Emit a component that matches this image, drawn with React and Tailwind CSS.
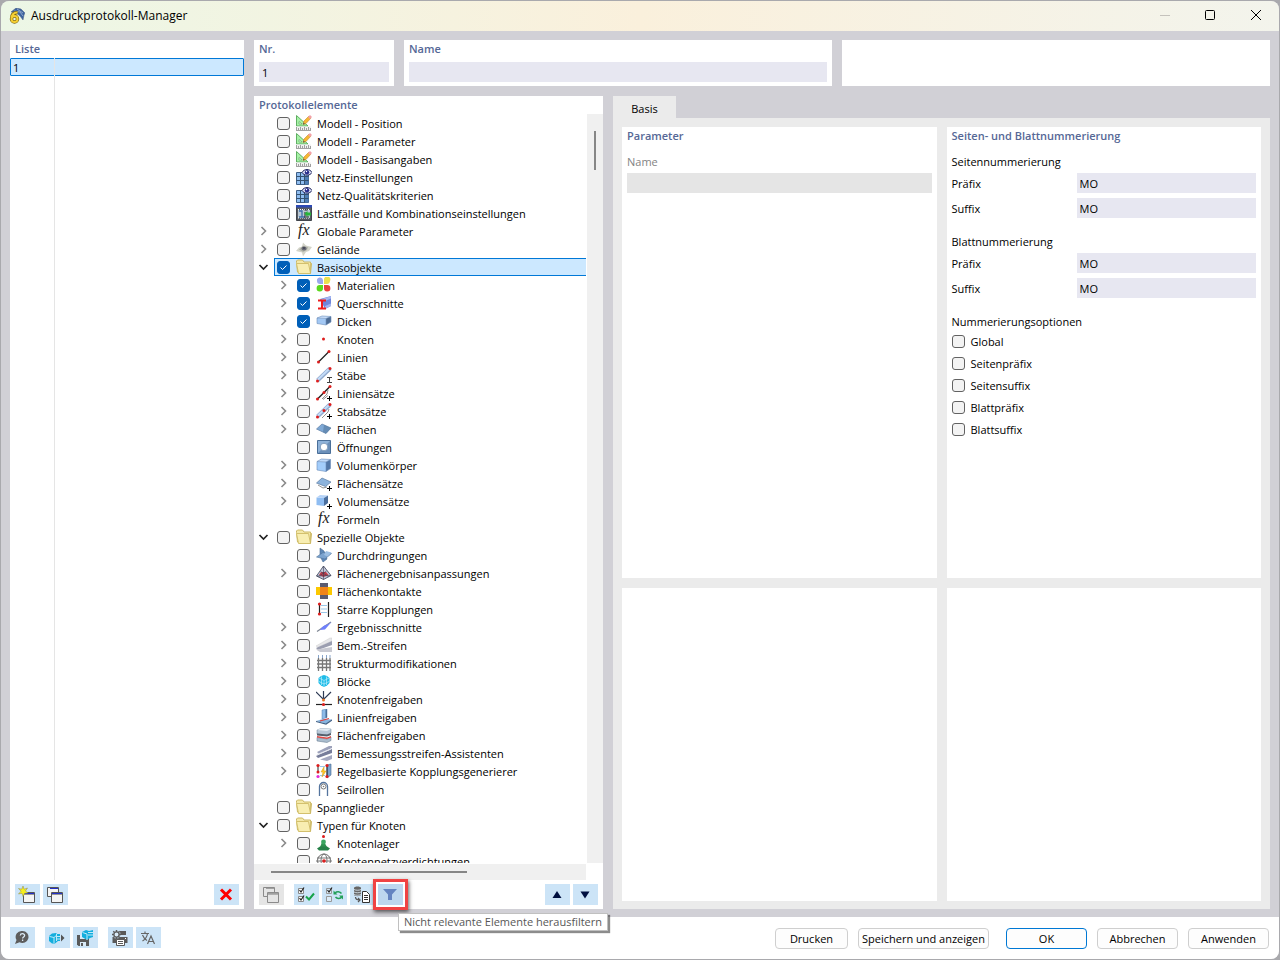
import React, { useState } from "react";

const I = ({ children }) => (
    <svg viewBox="0 0 16 16" className="w-4 h-4 shrink-0" fill="none" aria-hidden="true">{children}</svg>
);

const Plus = () => <path d="M13.500 11v5M11 13.500h5" stroke="#000" />;

const icons = {
    model: (
        <I>
            <path d="M0.500 0.500L12 11H0.500z" fill="#a6f2a6" stroke="#5fae62" />
            <path d="M3 6.500L6 9H3z" fill="#fff" stroke="#5fae62" strokeWidth=".7" />
            <path d="M7 9.500L8 6L13 1L15 3L10 8.500z" fill="#f7b733" stroke="#c48a2c" strokeWidth=".6" />
            <path d="M12 2L14 0l2 2-2 2z" fill="#f2a0a8" />
            <path d="M7 9.500l.5-2 1.500 1.500z" fill="#555" />
            <path d="M0 11.500h15V15H0z" fill="#f1f1f1" />
            <path d="M0.500 15v-3M2.500 15v-2M4.500 15v-3M6.500 15v-2M8.500 15v-3M10.500 15v-2M12.500 15v-3M14.500 15v-2M0 15.500h15" stroke="#8a8a8a" strokeWidth=".8" />
        </I>
    ),
    mesh: (
        <I>
            <path d="M0.500 3.500h12v12H0.500z" fill="#8fbdf0" stroke="#3e5f86" />
            <path d="M9 8h3.500v7.500H9z" fill="#4f7fb5" />
            <path d="M4.500 3.500v12M8.500 3.500v12M0.500 7.500h12M0.500 11.500h12" stroke="#34516f" />
            <path d="M6 3.500C8-.5 14-.5 16 3.500 14 7 8 7 6 3.500z" fill="#dfe2f5" stroke="#20265e" />
            <circle cx="11" cy="3.200" r="2.200" fill="#272c8c" />
            <circle cx="10.500" cy="2.500" r=".7" fill="#fff" />
        </I>
    ),
    loads: (
        <I>
            <path d="M0.500 0.500h15v15H0.500z" fill="#555a62" stroke="#41454c" />
            <path d="M0 0h16v2.500H0z" fill="#2c49b4" />
            <path d="M2 5h12v8H2z" fill="#b9c8d4" />
            <path d="M2 4.500h12M2 13h12" stroke="#fff" strokeDasharray="1 1" />
            <path d="M3 12h6M3 6h3v6" stroke="#3d6fa8" strokeWidth="1.300" />
            <path d="M8.500 5h3M8 12h5M9 7v4" stroke="#222" />
            <path d="M8.500 8.500L11.500 6v1.500H15v3h-3.500V12z" fill="#27b43a" />
        </I>
    ),
    fx: (
        <I>
            <text x="2" y="12" fill="#222" fontSize="16" fontStyle="italic" fontFamily="Liberation Serif, serif">fx</text>
        </I>
    ),
    terrain: (
        <I>
            <path d="M0 10L3 6.500l3-1 1-4 3 3 6 1.500-3 4-3 1-3 4.500L6 11.500z" fill="#d3d4c9" />
            <path d="M3 8.500l4-3.500 5 1-1 3-4 2z" fill="#aeb0a6" />
            <ellipse cx="8" cy="7.500" rx="2.500" ry="2" fill="#6a6b76" />
            <ellipse cx="8" cy="7" rx="1.200" ry="1" fill="#454655" />
        </I>
    ),
    folder: (
        <I>
            <path d="M0.500 3.500V2L1.500 1h5L8 3h6.500v10H1.500z" fill="#f3e8a8" stroke="#cdb964" />
            <path d="M2.500 14.500L0.500 4.500h12l2 10z" fill="#f8eeb2" stroke="#d3c06d" />
            <path d="M14.500 3.500l1 1-1 10" fill="#dccb84" stroke="#cdb964" />
        </I>
    ),
    materials: (
        <I>
            <path d="M1 4a3 3 0 016-1v4H4A3 3 0 011 4z" fill="#9ba8ec" />
            <path d="M8 7V3a3.200 3.200 0 116 1c0 2-1.500 3-3 3z" fill="#eae04e" />
            <path d="M7 8v3a3.200 3.200 0 11-3-3z" fill="#5cd81c" />
            <path d="M8 8h3a3.200 3.200 0 11-3 3z" fill="#e8413f" />
        </I>
    ),
    section: (
        <I>
            <path d="M4 4L15 1v10l-6 3z" fill="#6f86da" />
            <path d="M5 4.500l10-3.500v2.500L9 6zM9 11l6-2.500v2.500l-6 3z" fill="#a3b5f0" />
            <path d="M2 5.500h8M2 13.500h8M6 5.500v8" stroke="#ee1c1c" strokeWidth="2" />
        </I>
    ),
    thickness: (
        <I>
            <path d="M1 5l9 .5v6.500L1 10.500z" fill="#a3c8f4" />
            <path d="M1 5l5-2 9 .5-5 2z" fill="#c9defa" />
            <path d="M10 5.500l5-2V9l-5 3z" fill="#4c6b94" />
            <path d="M1 5l9 .5V12L1 10.500zM1 5l5-2 9 .5-5 2M15 3.500V9l-5 3" stroke="#6c8db9" strokeWidth=".6" />
        </I>
    ),
    node: <I><circle cx="7.500" cy="8" r="1.500" fill="#dd1d1d" /></I>,
    line: (
        <I>
            <path d="M2 13.500L13 2.500" stroke="#222" strokeWidth="1.300" />
            <circle cx="2.500" cy="13" r="1.500" fill="#dd1d1d" /><circle cx="13" cy="2.500" r="1.500" fill="#dd1d1d" />
        </I>
    ),
    member: (
        <I>
            <path d="M1.500 13.500L14 1.500" stroke="#8fa9cd" strokeWidth="4" />
            <path d="M1.500 13L14 1" stroke="#c3dbf8" strokeWidth="2" />
            <circle cx="1.500" cy="14" r="1.500" fill="#dd1d1d" /><circle cx="14" cy="1.500" r="1.500" fill="#dd1d1d" />
            <path d="M11 10.500h5M11 15.500h5M13.500 10.500v5" stroke="#444" />
        </I>
    ),
    lineSet: (
        <I>
            <path d="M1 14.500L14 1.500" stroke="#222" strokeWidth="1.500" />
            <path d="M6 14l5-5 1-4M7 14.500l5-4" stroke="#777" strokeWidth=".8" />
            <circle cx="1.500" cy="14" r="1.500" fill="#dd1d1d" /><circle cx="8" cy="7.500" r="1.500" fill="#dd1d1d" /><circle cx="14" cy="1.500" r="1.500" fill="#dd1d1d" />
            <Plus />
        </I>
    ),
    memberSet: (
        <I>
            <path d="M1.500 13.500L14 1.500" stroke="#8ea9cf" strokeWidth="4" />
            <path d="M1.500 13L14 1" stroke="#c3dbf8" strokeWidth="2" />
            <path d="M6 15l6-6 1-3" stroke="#777" strokeWidth=".8" />
            <circle cx="1.500" cy="14" r="1.500" fill="#dd1d1d" /><circle cx="8" cy="7.500" r="1.500" fill="#dd1d1d" /><circle cx="14" cy="1.500" r="1.500" fill="#dd1d1d" />
            <Plus />
        </I>
    ),
    surface: (
        <I>
            <path d="M0.500 8L6 3 15 7l-5 5.500z" fill="#7fa9d6" stroke="#5b7ca4" strokeWidth=".7" />
            <path d="M8 4L15 7l-5 5.500-3-1.500z" fill="#54799f" opacity=".6" />
        </I>
    ),
    opening: (
        <I>
            <path d="M1.500 1.500h13v13h-13z" fill="#8fb3da" stroke="#4a6f99" />
            <path d="M14 2v12H2z" fill="#456c98" opacity=".5" />
            <circle cx="8" cy="8" r="3.800" fill="#fff" stroke="#7f9cbd" />
        </I>
    ),
    solid: (
        <I>
            <path d="M1 4.500l9 .5v9.500L1 13z" fill="#a3cdfb" />
            <path d="M1 4.500L5.500 2l9 .5L10 5z" fill="#c0dafa" />
            <path d="M10 5l4.500-2.500v9L10 14.500z" fill="#5277a8" />
            <path d="M1 4.500l9 .5v9.500L1 13zM1 4.500L5.500 2l9 .5L10 5M14.500 2.500v9l-4.500 3" stroke="#6a8cb8" strokeWidth=".6" />
        </I>
    ),
    surfaceSet: (
        <I>
            <path d="M0.500 8L6 3 15 7l-5.500 4.500z" fill="#8cb3dc" stroke="#5b7ca4" strokeWidth=".7" />
            <path d="M2 10l5 3 4-1" stroke="#777" strokeWidth=".8" />
            <Plus />
        </I>
    ),
    solidSet: (
        <I>
            <path d="M0.500 4.500l7.500.5v8L0.500 12z" fill="#8fbdf2" />
            <path d="M0.500 4.500L4 2l8 .5L8 5z" fill="#b4d2f7" />
            <path d="M8 5l4-2.500V10l-4 3z" fill="#4b6f9e" />
            <Plus />
        </I>
    ),
    intersection: (
        <I>
            <path d="M4 1l4 3 3 8-4 3-3-6z" fill="#5d87b6" stroke="#456a94" strokeWidth=".6" />
            <path d="M0.500 10L7 5.500l8.500 1L9 12z" fill="#7ba3cf" stroke="#50739b" strokeWidth=".6" />
            <path d="M8 8l2-4 5.500 1.500-4 4z" fill="#9dbfe3" />
        </I>
    ),
    resultAdjust: (
        <I>
            <path d="M7.500 1L0.500 11l7 3.500 7.500-4z" fill="#c3c8d9" stroke="#3a3f55" strokeWidth=".8" />
            <path d="M3 10l2-3h5l2.500 3-5 2z" fill="#c93c48" />
            <path d="M7.500 1v13.500M0.500 11l14.500-.5M4.500 6.500l8 5M10.500 6l-8 5.500" stroke="#3a3f55" strokeWidth=".6" />
        </I>
    ),
    contact: (
        <I>
            <path d="M4 0h8v16H4z" fill="#5b5b70" /><path d="M0 4h16v8H0z" fill="#fcc800" /><path d="M4 4h8v8H4z" fill="#f18419" />
        </I>
    ),
    rigid: (
        <I>
            <path d="M3.500 3v10M12.500 1v15" stroke="#222" strokeWidth="1.200" />
            <path d="M5 4.500h6M5 8h6M5 11.500h6" stroke="#9bc7e8" />
            <circle cx="3.500" cy="3" r="1.600" fill="#dd1d1d" /><circle cx="3.500" cy="13" r="1.600" fill="#dd1d1d" />
        </I>
    ),
    resultSection: (
        <I>
            <path d="M1 12.500L15 3" stroke="#7e8693" strokeWidth="1.200" />
            <path d="M5 9.500c3-4 6-3 10.500-6.500L9 10.500 4 11z" fill="#6f80fb" />
        </I>
    ),
    strip: (
        <I>
            <path d="M0 9L14 1h2v3L2 10z" fill="#e8e8ea" stroke="#ccc" strokeWidth=".5" />
            <path d="M0 11L16 4v4L2 13z" fill="#9b9eb0" />
            <path d="M0 12.500l16-2.500v5H4z" fill="#c9cad2" />
        </I>
    ),
    structure: (
        <I>
            <path d="M2.500 3v13M6.500 3v13M10.500 3v13M14 3v13M1 5.500h14M1 9h14M1 12.500h14" stroke="#777" strokeWidth="1.300" />
            <path d="M2.500 0v3M6.500 0v3M10.500 0v3M14 0v3" stroke="#89a6cc" />
        </I>
    ),
    block: (
        <I>
            <path d="M8 2l3 1 2.500 2v5L11 12.500 8 14l-3-1.500L2.500 10V5L5 3z" fill="#1fbce8" />
            <path d="M3 5l5 2.500L13 5M8 7.500v6M5.500 3.500v8.500M10.500 3.500v8.500M3 8.500L8 11l5-2.500" stroke="#b8ecfa" strokeWidth=".7" />
        </I>
    ),
    nodeRelease: (
        <I>
            <path d="M0 1l7.500 7.500L15 1M7.500 0v8" stroke="#2e3b55" strokeWidth="1.200" />
            <path d="M0 13.500h16" stroke="#222" strokeWidth="1.200" />
            <circle cx="7.500" cy="9" r="1.500" fill="#e6792b" /><circle cx="7.500" cy="13.500" r="1.600" fill="#dd1d1d" />
        </I>
    ),
    lineRelease: (
        <I>
            <path d="M6 1l5-1v8.500l-5 1.500z" fill="#8dbbe8" stroke="#5583b3" strokeWidth=".5" />
            <path d="M9.500 .5L11 0v8.500l-1.500.5z" fill="#4a7099" />
            <path d="M0 12l7-2 9 .5-6 4z" fill="#86b6e2" />
            <path d="M4 12L13 9.500" stroke="#e0403c" strokeWidth="1.200" />
            <path d="M0 12.500l10 2.500 6-4" stroke="#3f5f85" strokeWidth="1.200" />
        </I>
    ),
    surfaceRelease: (
        <I>
            <path d="M1 3l4-1.500 10 .5v4l-4 2L1 7z" fill="#b7c7d6" stroke="#71889e" strokeWidth=".5" />
            <path d="M1 3l4-1.500 10 .5-4 2z" fill="#e3ebf2" />
            <path d="M1 10.500l10 1.500 4-2v3.500l-4 2L1 14z" fill="#a9bccd" stroke="#5d7389" strokeWidth=".5" />
            <path d="M1 6.500l10 1L15 6v2l-4 1.500L1 8.500z" fill="#55606c" />
            <path d="M1 9l10 1.500L15 9v1.500l-4 1.500-10-1.500z" fill="#e04a45" />
        </I>
    ),
    stripAssist: (
        <I>
            <path d="M1 7L13 1h3v2L3 9z" fill="#9ca1ba" />
            <path d="M0 11L16 4v4L2 13z" fill="#777d9a" />
            <path d="M4 14.500l12-4.500v4l-5 2z" fill="#a4a8c0" />
            <path d="M1 9.500L15 4" stroke="#e4e6ee" />
        </I>
    ),
    ruleCoupling: (
        <I>
            <path d="M11 2l4-1v11l-4 3z" fill="#7ba3cf" stroke="#3f648d" strokeWidth=".6" />
            <path d="M2 3v6M11 3v10" stroke="#222" />
            <path d="M4 3.500h5M4 12.500h5" stroke="#9bc7e8" />
            <path d="M8 4L5 9h2l-1 5 4-6H8z" fill="#ffc928" stroke="#d19a15" strokeWidth=".5" />
            <circle cx="2" cy="2.500" r="1.600" fill="#dd1d1d" /><circle cx="11" cy="2.500" r="1.600" fill="#dd1d1d" />
            <circle cx="2" cy="9" r="1.500" fill="#dd1d1d" />
            <circle cx="2" cy="13.500" r="1.600" fill="#e22ad8" /><circle cx="11" cy="13.500" r="1.600" fill="#dd1d1d" />
        </I>
    ),
    pulley: (
        <I>
            <path d="M3.500 15V5.500a4 4 0 018 0V15" stroke="#54749e" strokeWidth="1.300" />
            <circle cx="7.500" cy="5.500" r="2.500" fill="#fff" stroke="#777" /><circle cx="7.500" cy="5.500" r=".8" fill="#777" />
        </I>
    ),
    support: (
        <I>
            <path d="M7 5l4 7H4z" fill="#2f9150" /><path d="M1 13.500l3-2h7l3 2-2 2H3z" fill="#268148" />
            <circle cx="7.500" cy="7" r="2.400" fill="#3aa660" /><circle cx="7.500" cy="1.500" r="1.500" fill="#dd1d1d" />
        </I>
    ),
    refinement: (
        <I>
            <circle cx="8" cy="7.500" r="6.500" stroke="#666" /><ellipse cx="8" cy="7.500" rx="3" ry="6.500" stroke="#777" />
            <path d="M1 5h14M0 8h16" stroke="#777" /><circle cx="8" cy="8" r="1.800" fill="#dd1d1d" />
        </I>
    ),
};

// open: undefined = leaf, false = collapsed, true = expanded
const tree = [
    { label: "Modell - Position", icon: "model" },
    { label: "Modell - Parameter", icon: "model" },
    { label: "Modell - Basisangaben", icon: "model" },
    { label: "Netz-Einstellungen", icon: "mesh" },
    { label: "Netz-Qualitätskriterien", icon: "mesh" },
    { label: "Lastfälle und Kombinationseinstellungen", icon: "loads" },
    { label: "Globale Parameter", icon: "fx", open: false },
    { label: "Gelände", icon: "terrain", open: false },
    { label: "Basisobjekte", icon: "folder", open: true, checked: true, selected: true },
    { label: "Materialien", icon: "materials", child: true, open: false, checked: true },
    { label: "Querschnitte", icon: "section", child: true, open: false, checked: true },
    { label: "Dicken", icon: "thickness", child: true, open: false, checked: true },
    { label: "Knoten", icon: "node", child: true, open: false },
    { label: "Linien", icon: "line", child: true, open: false },
    { label: "Stäbe", icon: "member", child: true, open: false },
    { label: "Liniensätze", icon: "lineSet", child: true, open: false },
    { label: "Stabsätze", icon: "memberSet", child: true, open: false },
    { label: "Flächen", icon: "surface", child: true, open: false },
    { label: "Öffnungen", icon: "opening", child: true },
    { label: "Volumenkörper", icon: "solid", child: true, open: false },
    { label: "Flächensätze", icon: "surfaceSet", child: true, open: false },
    { label: "Volumensätze", icon: "solidSet", child: true, open: false },
    { label: "Formeln", icon: "fx", child: true },
    { label: "Spezielle Objekte", icon: "folder", open: true },
    { label: "Durchdringungen", icon: "intersection", child: true },
    { label: "Flächenergebnisanpassungen", icon: "resultAdjust", child: true, open: false },
    { label: "Flächenkontakte", icon: "contact", child: true },
    { label: "Starre Kopplungen", icon: "rigid", child: true },
    { label: "Ergebnisschnitte", icon: "resultSection", child: true, open: false },
    { label: "Bem.-Streifen", icon: "strip", child: true, open: false },
    { label: "Strukturmodifikationen", icon: "structure", child: true, open: false },
    { label: "Blöcke", icon: "block", child: true, open: false },
    { label: "Knotenfreigaben", icon: "nodeRelease", child: true, open: false },
    { label: "Linienfreigaben", icon: "lineRelease", child: true, open: false },
    { label: "Flächenfreigaben", icon: "surfaceRelease", child: true, open: false },
    { label: "Bemessungsstreifen-Assistenten", icon: "stripAssist", child: true, open: false },
    { label: "Regelbasierte Kopplungsgenerierer", icon: "ruleCoupling", child: true, open: false },
    { label: "Seilrollen", icon: "pulley", child: true },
    { label: "Spannglieder", icon: "folder" },
    { label: "Typen für Knoten", icon: "folder", open: true },
    { label: "Knotenlager", icon: "support", child: true, open: false },
    { label: "Knotennetzverdichtungen", icon: "refinement", child: true },
];

function CheckBox({ id, defaultChecked = false }) {
    const [checked, setChecked] = useState(defaultChecked);
    return (
        <span className="relative w-[13px] h-[13px] shrink-0">
            <input
                id={id}
                type="checkbox"
                checked={checked}
                onChange={() => setChecked(!checked)}
                className="appearance-none block w-[13px] h-[13px] rounded-[3px] border border-[#626262] bg-[#f3f3f3] checked:bg-[#005fb8] checked:border-[#005fb8]"
            />
            {checked && (
                <svg viewBox="0 0 13 13" className="absolute inset-0 pointer-events-none" fill="none">
                    <path d="M3.500 6.500l2 2 4-4" stroke="#fff" />
                </svg>
            )}
        </span>
    );
}

function TreeRow({ item, id }) {
    return (
        <li className={item.child ? "flex h-[18px] pl-5" : "flex h-[18px]"}>
            <span className="w-5 shrink-0 flex items-center justify-center">
                {item.open !== undefined && (
                    <button type="button" aria-label={item.label} aria-expanded={item.open}>
                        <svg viewBox="0 0 12 12" className="w-3 h-3" fill="none">
                            {item.open
                                ? <path d="M1.500 4l4 4 4-4" stroke="#222" strokeWidth="1.700" />
                                : <path d="M3.500 2l4 4-4 4" stroke="#8a8a8a" strokeWidth="1.600" />}
                        </svg>
                    </button>
                )}
            </span>
            <span className={item.selected
                ? "flex flex-1 items-center border-y border-l border-[#0078d7] bg-[#cce8ff] pl-0.5"
                : "flex flex-1 items-center pl-[3px]"}>
                <CheckBox id={id} defaultChecked={item.checked} />
                <label htmlFor={id} className="flex items-center gap-[5px] pl-1.5 whitespace-nowrap">
                    {icons[item.icon]}
                    <span className="leading-4 pt-0.5">{item.label}</span>
                </label>
            </span>
        </li>
    );
}

function ToolButton({ label, children, tone = "bg-[#cce4f7]" }) {
    return (
        <button type="button" aria-label={label} className={`${tone} w-[25px] h-[21px] pr-px flex items-center justify-center shrink-0`}>
            {children}
        </button>
    );
}

function Heading({ children }) {
    return <h2 className="h-[18px] leading-[18px] font-semibold text-[#566896]">{children}</h2>;
}

function Windows({ gray }) {
    const edge = gray ? "#8b8b8b" : "#555";
    const fill = gray ? "#e5e5e5" : "#f4f4f4";
    const bar = gray ? "#a0a0a0" : "#2330c8";
    return (
        <svg viewBox="0 0 18 18" className="w-[18px] h-[18px]" fill="none">
            <path d="M1.500 1.500h11v9h-11z" fill={fill} stroke={edge} />
            <path d="M4 2.500h8" stroke={bar} />
            <path d="M5.500 6.500h11v10h-11z" fill={fill} stroke={edge} />
            <path d="M6 7.500h10" stroke={bar} />
            <path d="M6 8.500h10" stroke={edge} strokeWidth=".6" />
        </svg>
    );
}

const inputClass = "h-5 min-w-0 px-[3px] bg-[#e7e7f1] outline-none";

function NumberField({ id, label }) {
    return (
        <div className="flex items-center">
            <label htmlFor={id} className="w-[125px] shrink-0 pt-0.5">{label}</label>
            <input id={id} defaultValue="MO" className={`${inputClass} flex-1`} />
        </div>
    );
}

function TitleBar() {
    return (
        <header className="flex items-center h-[30px] shrink-0 pl-2 bg-linear-to-r from-[#ecf7e6] via-[#faf0dc] to-[#f3f4ec]">
            <svg viewBox="0 0 16 16" className="w-4 h-4" fill="none">
                <path d="M2 4l5-4 5 1 4 4-1 2-1 5-3-4-5-4z" fill="#3c63a0" stroke="#4c5f80" strokeWidth=".5" />
                <path d="M5 3l6 1 3 4M8 1l6 4" stroke="#8ea6cb" />
                <path d="M8.500 4.500C4.500 4.500 2.500 7 2.500 11a3 3 0 103-3c-1.500 0-2.500 1-3 2.500" stroke="#7d6718" strokeWidth="3.500" />
                <path d="M8.500 4.500C4.500 4.500 2.500 7 2.500 11a3 3 0 103-3c-1.500 0-2.500 1-3 2.500" stroke="#f5cf33" strokeWidth="2" />
            </svg>
            <h1 className="pl-1.5 text-[12px] text-black">Ausdruckprotokoll-Manager</h1>
            <div className="ml-auto flex items-center">
                <button type="button" aria-label="Minimieren" disabled className="w-[45px] h-[30px] flex items-center justify-center">
                    <svg viewBox="0 0 12 12" className="w-3 h-3"><path d="M0 5.500h10" stroke="#c5c2bc" /></svg>
                </button>
                <button type="button" aria-label="Maximieren" className="w-[45px] h-[30px] flex items-center justify-center">
                    <svg viewBox="0 0 12 12" className="w-3 h-3" fill="none"><rect x=".5" y=".5" width="9" height="9" rx="1" stroke="#000" /></svg>
                </button>
                <button type="button" aria-label="Schließen" className="w-[46px] h-[30px] flex items-center justify-center">
                    <svg viewBox="0 0 12 12" className="w-3 h-3"><path d="M1 0l10 10M11 0L1 10" stroke="#000" /></svg>
                </button>
            </div>
        </header>
    );
}

function ListPanel() {
    return (
        <section className="w-[234px] shrink-0 bg-white flex flex-col">
            <div className="pl-[5px]"><Heading>Liste</Heading></div>
            <div className="relative flex-1">
                <ul>
                    <li className="h-[18px] pt-0.5 pl-0.5 border border-[#0078d7] rounded-[1px] bg-[#cce8ff] flex items-center">1</li>
                </ul>
                <div className="absolute inset-y-0 left-11 border-l border-[#e5e5e5]" />
            </div>
            <div className="flex gap-[3px] px-[5px] pt-1 pb-1">
                <ToolButton label="Neu">
                    <svg viewBox="0 0 18 18" className="w-[18px] h-[18px]" fill="none">
                        <path d="M5.500 6.500h11v10h-11z" fill="#f4f4f4" stroke="#555" />
                        <path d="M6 7.500h10" stroke="#2330c8" />
                        <path d="M6 8.500h10" stroke="#555" strokeWidth=".6" />
                        <path d="M5 0l1.200 3.200L9.500 2 7.500 5l2.500 2-3.300.3L5 10.500 4 7.300.5 8 3 5.200.5 2.500l3.200.7z" fill="#f5ee1c" stroke="#8c8750" strokeWidth=".5" />
                    </svg>
                </ToolButton>
                <ToolButton label="Kopieren"><Windows /></ToolButton>
                <span className="flex-1" />
                <ToolButton label="Löschen">
                    <svg viewBox="0 0 14 14" className="w-3.5 h-3.5"><path d="M2 1.500l10 10M12 1.500l-10 10" stroke="#f00" strokeWidth="3" /></svg>
                </ToolButton>
            </div>
        </section>
    );
}

function ElementsPanel() {
    return (
        <section className="w-[349px] shrink-0 bg-white flex flex-col min-h-0">
            <div className="pl-[5px]"><Heading>Protokollelemente</Heading></div>
            <div className="flex flex-1 min-h-0">
                <ul className="flex-1 min-w-0 overflow-hidden">
                    {tree.map((item, i) => <TreeRow key={i} item={item} id={`item-${i}`} />)}
                </ul>
                <div className="ml-px w-4 bg-[#f0f0f0] flex justify-center">
                    <div className="mt-[17px] h-[39px] w-0.5 bg-[#868686]" />
                </div>
            </div>
            <div className="mt-px mr-[17px] h-4 bg-[#f0f0f0] flex items-center">
                <div className="ml-[17px] w-[196px] h-0.5 bg-[#868686]" />
            </div>
            <div className="flex gap-[3px] px-[5px] pt-1 pb-1">
                <ToolButton label="Kopieren" tone="bg-[#e5e5e5]"><Windows gray /></ToolButton>
                <span className="w-1" />
                <ToolButton label="Alle auswählen">
                    <svg viewBox="0 0 18 18" className="w-[18px] h-[18px]" fill="none">
                        <path d="M1.500 2.500h5v5h-5zM1.500 10.500h5v5h-5z" fill="#fff" stroke="#888" />
                        <path d="M2.500 4l1.500 2 3-4.500M2.500 12l1.500 2 3-4.500" stroke="#222" strokeWidth="1.200" />
                        <path d="M9 10.500l3 3 5-6" stroke="#17a34a" strokeWidth="2" />
                    </svg>
                </ToolButton>
                <ToolButton label="Auswahl umkehren">
                    <svg viewBox="0 0 18 18" className="w-[18px] h-[18px]" fill="none">
                        <path d="M1.500 2.500h5v5h-5zM1.500 10.500h5v5h-5z" fill="#dcecf8" stroke="#999" />
                        <path d="M2.500 4l1.500 2 3-4.500" stroke="#222" strokeWidth="1.200" />
                        <path d="M10 7c2-2 5-1.500 6.500.5M17 10.500c-1.500 2.500-5 2.500-6.500.5" stroke="#24a05a" strokeWidth="1.500" />
                        <path d="M8.500 4.500v4h4zM18 13.500v-4h-4z" fill="#24a05a" />
                    </svg>
                </ToolButton>
                <ToolButton label="Aus Datenbank übernehmen">
                    <svg viewBox="0 0 18 18" className="w-[18px] h-[18px]" fill="none">
                        <path d="M1 2c0-2 7-2 7 0v7c0 1.500-7 1.500-7 0z" fill="#666" />
                        <path d="M1 3.500c2 1 5 1 7 0M1 6c2 1 5 1 7 0M1 8.500c2 1 5 1 7 0" stroke="#e0edf7" strokeWidth=".8" />
                        <path d="M2.500 11c0 2 1 3 4 3M5 12l2 2-2 2" stroke="#555" strokeWidth="1.200" />
                        <path d="M9.500 5.500h4l3 3v8h-7z" fill="#fff" stroke="#333" />
                        <path d="M11 9.500h4M11 11.500h4M11 13.500h4" stroke="#333" />
                    </svg>
                </ToolButton>
                <div className="relative">
                    <ToolButton label="Nicht relevante Elemente herausfiltern" tone="bg-[#bdd7ee]">
                        <svg viewBox="0 0 16 16" className="w-4 h-4"><path d="M1 2h14l-5 5.500V13l-4 0v-5.500z" fill="#6484c0" /></svg>
                    </ToolButton>
                    <div className="absolute -inset-[5px] border-3 border-[#f04343] shadow-[1px_2px_4px_rgba(0,0,0,0.6)] pointer-events-none" />
                    <div role="tooltip" className="absolute z-10 left-5 top-[29px] h-[18px] px-[5px] leading-4 whitespace-nowrap bg-white border border-[#c0c0c0] text-[#575757] shadow-[2px_2px_1px_rgba(0,0,0,0.45)]">
                        Nicht relevante Elemente herausfiltern
                    </div>
                </div>
                <span className="flex-1" />
                <ToolButton label="Nach oben">
                    <svg viewBox="0 0 10 10" className="w-2.5 h-2.5"><path d="M5 1L9.500 8H.5z" fill="#001040" /></svg>
                </ToolButton>
                <ToolButton label="Nach unten">
                    <svg viewBox="0 0 10 10" className="w-2.5 h-2.5"><path d="M5 8.500L9.500 1.500H.5z" fill="#001040" /></svg>
                </ToolButton>
            </div>
        </section>
    );
}

function BasisTab() {
    const options = ["Global", "Seitenpräfix", "Seitensuffix", "Blattpräfix", "Blattsuffix"];
    return (
        <section className="flex-1 min-w-0 flex flex-col">
            <div role="tablist" className="flex">
                <button type="button" role="tab" aria-selected="true" className="h-[22px] w-[63px] pt-1 bg-[#ebebeb]">Basis</button>
            </div>
            <div className="flex-1 grid grid-cols-2 grid-rows-[451fr_313fr] gap-2.5 p-[9px] pb-2 bg-[#ebebeb]">
                <div className="bg-white px-[5px]">
                    <Heading>Parameter</Heading>
                    <label htmlFor="param-name" className="block mt-2 h-[18px] leading-[18px] text-[#838383]">Name</label>
                    <input id="param-name" disabled className="mt-0.5 block w-full h-5 bg-[#e5e5e5]" />
                </div>
                <div className="bg-white px-[5px]">
                    <Heading>Seiten- und Blattnummerierung</Heading>
                    <h3 className="mt-2 mb-0.5 leading-[18px]">Seitennummerierung</h3>
                    <div className="flex flex-col gap-[5px]">
                        <NumberField id="page-prefix" label="Präfix" />
                        <NumberField id="page-suffix" label="Suffix" />
                    </div>
                    <h3 className="mt-[15px] mb-0.5 leading-[18px]">Blattnummerierung</h3>
                    <div className="flex flex-col gap-[5px]">
                        <NumberField id="sheet-prefix" label="Präfix" />
                        <NumberField id="sheet-suffix" label="Suffix" />
                    </div>
                    <h3 className="mt-[15px] leading-[18px]">Nummerierungsoptionen</h3>
                    {options.map((name) => (
                        <div key={name} className="flex items-center h-[22px] pb-px gap-1.5">
                            <CheckBox id={`opt-${name}`} />
                            <label htmlFor={`opt-${name}`} className="pt-px">{name}</label>
                        </div>
                    ))}
                </div>
                <div className="bg-white" />
                <div className="bg-white" />
            </div>
        </section>
    );
}

function Footer() {
    const btn = "h-[21px] rounded-[4px] border bg-[#fdfdfd] whitespace-nowrap leading-[19px]";
    return (
        <footer className="flex items-center h-[42px] pb-px shrink-0 bg-white pl-[9px] pr-2.5">
            <ToolButton label="Hilfe">
                <svg viewBox="0 0 16 16" className="w-4 h-4">
                    <path d="M8.500 1a6 6 0 11-3 11.200L1 14l1.500-4A6 6 0 018.500 1z" fill="#5d5d5d" />
                    <path d="M6.300 5.500c.2-2.500 4.400-2.300 4.300 0 0 1.500-2 1.500-2 3M8.600 9.500v1.500" stroke="#dcecf8" strokeWidth="1.300" fill="none" />
                </svg>
            </ToolButton>
            <span className="w-2.5" />
            <ToolButton label="Exportieren">
                <svg viewBox="0 0 18 16" className="w-[18px] h-4" fill="none">
                    <path d="M1 6l3-2.500 4-.5 2 2v6l-3 2.500H4L1 11z" fill="#13aede" /><path d="M1.500 6.500L6 7.500l3.500-3M6 7.500V13" stroke="#bfe9f8" />
                    <path d="M8.500 4H12v7H8.500z" fill="#13aede" /><path d="M8.500 6.500H12M8.500 9H12M8.500 4v7" stroke="#bfe9f8" />
                    <path d="M13 4.500L16.500 8 13 11.500z" fill="#555" />
                </svg>
            </ToolButton>
            <span className="w-[3px]" />
            <ToolButton label="Speichern">
                <svg viewBox="0 0 18 18" className="w-[18px] h-[18px]" fill="none">
                    <path d="M1 6h12v11H2.500L1 15.500z" fill="#5a5a5a" /><path d="M4 6h5v4H4zM4 13h6v4H4z" fill="#d9eaf7" /><path d="M5 14h2v3H5z" fill="#5a5a5a" />
                    <path d="M6 3l4-2 3 1 4-1v7l-3 1-3 2-5-3z" fill="#13aede" /><path d="M6.500 3.500L11 5v6M12 3.500h5M12 6h5" stroke="#bfe9f8" />
                </svg>
            </ToolButton>
            <span className="w-2.5" />
            <ToolButton label="Druckeinstellungen">
                <svg viewBox="0 0 18 18" className="w-[18px] h-[18px]" fill="none">
                    <path d="M9 2h6v4H9zM1.500 8h15v6h-15z" fill="#5a5a5a" />
                    <path d="M5.500 10.500h8v6h-8z" fill="#fff" stroke="#5a5a5a" /><path d="M7 12.500h5M7 14.500h5" stroke="#5a5a5a" />
                    <circle cx="5.500" cy="5.500" r="4" fill="#cce4f7" />
                    <path d="M5.500 1v9M1 5.500h9M2.300 2.300l6.400 6.400M8.700 2.300L2.300 8.700" stroke="#5a5a5a" strokeWidth="1.500" />
                    <circle cx="5.500" cy="5.500" r="2.600" fill="#d9eaf7" stroke="#5a5a5a" strokeWidth="1.300" />
                    <path d="M14 9.500h1" stroke="#fff" />
                </svg>
            </ToolButton>
            <span className="w-[3px]" />
            <ToolButton label="Sprache">
                <svg viewBox="0 0 16 16" className="w-4 h-4" fill="none" stroke="#666" strokeWidth="1.200">
                    <path d="M1 3.500h8M5 1.500v2M2.500 11C5 9.500 7 7 7.500 3.500M2.500 5c1 2.500 2.500 4.500 4.500 5.500M7.500 14L11 6l3.500 8M8.700 11.500h4.600" />
                </svg>
            </ToolButton>
            <div className="ml-auto mt-0.5 flex gap-2.5">
                <button type="button" className={`${btn} w-[73px] border-[#cfcfcf]`}>Drucken</button>
                <button type="button" className={`${btn} w-[131px] mr-[7px] border-[#cfcfcf]`}>Speichern und anzeigen</button>
                <button type="button" className={`${btn} w-[81px] border-[#0078d4]`}>OK</button>
                <button type="button" className={`${btn} w-[81px] border-[#cfcfcf]`}>Abbrechen</button>
                <button type="button" className={`${btn} w-[81px] border-[#cfcfcf]`}>Anwenden</button>
            </div>
        </footer>
    );
}

export default function App() {
    return (
        <div className="h-screen bg-[#a9a9ad] p-px font-['Open_Sans','Noto_Sans',sans-serif] text-[11px] leading-4 text-black">
            <div className="h-full flex flex-col rounded-lg overflow-hidden bg-[#d1d0d6]">
                <TitleBar />
                <main className="flex-1 min-h-0 flex gap-2.5 p-[9px] pb-2">
                    <ListPanel />
                    <div className="flex-1 min-w-0 flex flex-col gap-2.5">
                        <div className="grid grid-cols-[140px_1fr_1fr] gap-2.5 h-[46px] shrink-0">
                            <div className="bg-white px-[5px]">
                                <label htmlFor="nr" className="block h-[22px] leading-[18px] font-semibold text-[#566896]">Nr.</label>
                                <input id="nr" defaultValue="1" className={`${inputClass} block w-full`} />
                            </div>
                            <div className="bg-white px-[5px]">
                                <label htmlFor="name" className="block h-[22px] leading-[18px] font-semibold text-[#566896]">Name</label>
                                <input id="name" className={`${inputClass} block w-full`} />
                            </div>
                            <div className="bg-white" />
                        </div>
                        <div className="flex flex-1 min-h-0 gap-2.5">
                            <ElementsPanel />
                            <BasisTab />
                        </div>
                    </div>
                </main>
                <Footer />
            </div>
        </div>
    );
}
